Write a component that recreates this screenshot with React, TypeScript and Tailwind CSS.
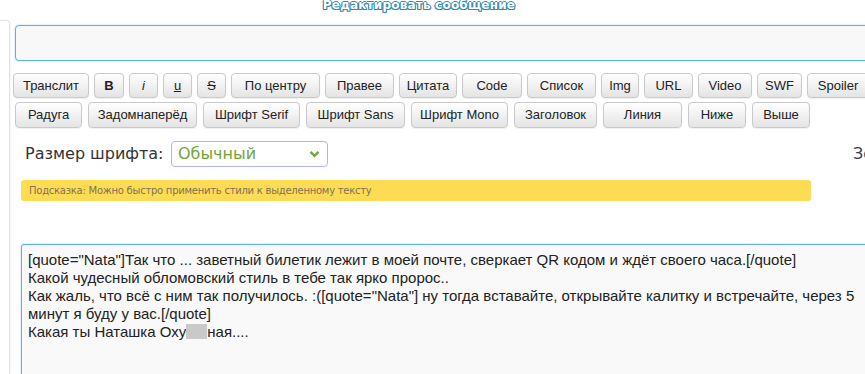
import React from "react";

type Btn = { label: React.ReactNode; w: string };

const row1: Btn[] = [
  { label: "Транслит", w: "w-[76px]" },
  { label: <b>B</b>, w: "w-[30px]" },
  { label: <i>i</i>, w: "w-[29px]" },
  { label: <u>u</u>, w: "w-[29px]" },
  { label: <s>S</s>, w: "w-[29px]" },
  { label: "По центру", w: "w-[89px]" },
  { label: "Правее", w: "w-[69px]" },
  { label: "Цитата", w: "w-[58px]" },
  { label: "Code", w: "w-[60px]" },
  { label: "Список", w: "w-[69px]" },
  { label: "Img", w: "w-[38px]" },
  { label: "URL", w: "w-[49px]" },
  { label: "Video", w: "w-[54px]" },
  { label: "SWF", w: "w-[45px]" },
  { label: "Spoiler", w: "w-[62px]" },
];

const row2: Btn[] = [
  { label: "Радуга", w: "w-[67px]" },
  { label: "Задомнаперёд", w: "w-[109px]" },
  { label: "Шрифт Serif", w: "w-[97px]" },
  { label: "Шрифт Sans", w: "w-[99px]" },
  { label: "Шрифт Mono", w: "w-[97px]" },
  { label: "Заголовок", w: "w-[83px]" },
  { label: "Линия", w: "w-[79px]" },
  { label: "Ниже", w: "w-[58px]" },
  { label: "Выше", w: "w-[58px]" },
];

function ToolButton({ label, w }: Btn) {
  return (
    <button
      className={`${w} shrink-0 h-full flex items-center justify-center rounded-[4px] border border-[#c9c9c9] bg-gradient-to-b from-white to-[#e4e4e4] text-[13px] text-[#222] font-['Liberation_Sans',Arial,sans-serif] shadow-[0_1px_1px_rgba(0,0,0,0.06)]`}
    >
      {label}
    </button>
  );
}

export default function App() {
  return (
    <div className="w-[865px] h-[374px] overflow-hidden bg-white flex">
      {/* left panel edge */}
      <div className="w-[10px] shrink-0 mt-[20px] border-t border-r border-[#e2e2e2] rounded-tr-[4px] shadow-[1px_0_2px_rgba(0,0,0,0.04)]" />

      <div className="flex flex-col shrink-0 w-[855px]">
        {/* title */}
        <div className="shrink-0 ml-[311px] w-[196px] h-[12px] mt-[-1px] text-center whitespace-nowrap font-['DejaVu_Sans',sans-serif] font-bold text-[12px] leading-[12px] text-white tracking-[0.2px] [text-shadow:1px_0_0_#3089ae,-1px_0_0_#3089ae,0_1px_0_#3089ae,0_-1px_0_#3089ae,1px_1px_0_#3089ae,-1px_1px_0_#3089ae]">
          Редактировать сообщение
        </div>

        {/* subject input */}
        <div className="ml-[5px] mt-[14px] w-[900px] h-[36px] shrink-0 rounded-[4px] border border-[#5fb0e6] bg-[#f8f8f8] shadow-[0_0_2px_rgba(95,176,230,0.6)]" />

        {/* toolbar */}
        <div className="shrink-0 ml-[3px] mt-[12px] h-[25px] flex gap-[5px]">
          {row1.map((b, i) => (
            <ToolButton key={i} {...b} />
          ))}
        </div>
        <div className="shrink-0 ml-[5px] mt-[4px] h-[26px] flex gap-[6px]">
          {row2.map((b, i) => (
            <ToolButton key={i} {...b} />
          ))}
        </div>

        {/* font size */}
        <div className="shrink-0 mt-[13px] h-[26px] flex items-center font-['DejaVu_Sans',sans-serif] text-[16px] text-[#333] whitespace-nowrap">
          <span className="ml-[15px] w-[146px] shrink-0">Размер шрифта:</span>
          <div className="w-[157px] h-[26px] shrink-0 rounded-[4px] border border-[#b4b4f2] flex items-center justify-between pl-[6px] pr-[7px]">
            <span className="text-[16px] text-[#72a53a]">Обычный</span>
            <svg width="11" height="8" viewBox="0 0 11 8">
              <path d="M1.5 1.8 L5.5 5.8 L9.5 1.8" fill="none" stroke="#6fab35" strokeWidth="2.4" />
            </svg>
          </div>
          <span className="ml-[525px] shrink-0 text-[#3c3c55]">Зона</span>
        </div>

        {/* hint */}
        <div className="ml-[11px] mt-[13px] w-[790px] h-[21px] shrink-0 rounded-[3px] bg-[#fddc53] flex items-center pl-[8px] font-['DejaVu_Sans',sans-serif] text-[10px] tracking-[-0.25px] text-[#7e7358] whitespace-nowrap">
          Подсказка: Можно быстро применить стили к выделенному тексту
        </div>

        {/* message */}
        <div className="ml-[11px] mt-[43px] w-[900px] h-[140px] shrink-0 border border-[#5fb0e6] rounded-[3px] bg-[#f9f9f9] shadow-[0_0_2px_rgba(95,176,230,0.6)] pt-[6px] pl-[6px]">
          <div className="w-[842px] whitespace-pre-wrap font-['Liberation_Sans',Arial,sans-serif] text-[15px] leading-[18px] text-[#222]">
            {'[quote="Nata"]Так что ... заветный билетик лежит в моей почте, сверкает QR кодом и ждёт своего часа.[/quote]\nКакой чудесный обломовский стиль в тебе так ярко пророс..\nКак жаль, что всё с ним так получилось. :([quote="Nata"] ну тогда вставайте, открывайте калитку и встречайте, через 5 минут я буду у вас.[/quote]\nКакая ты Наташка Оху'}
            <span className="inline-block w-[21px] h-[15px] bg-[#c9c9c9] align-[-2px]" />
            {"ная...."}
          </div>
        </div>
      </div>
    </div>
  );
}
